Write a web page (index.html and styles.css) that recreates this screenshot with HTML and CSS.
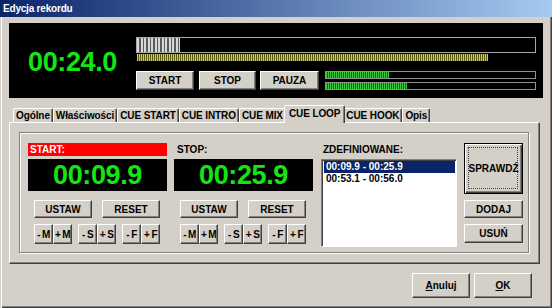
FILE: index.html
```html
<!DOCTYPE html>
<html lang="pl">
<head>
    <meta charset="UTF-8">
    <title>Edycja rekordu</title>
    <link rel="stylesheet" href="styles.css">
</head>
<body>
    <div class="window">
        <div class="titlebar">Edycja rekordu</div>

        <div class="client">
            <div class="player">
                <div class="player-time">00:24.0</div>
                <div class="player-controls">
                    <div class="progress"><div class="progress-fill" style="width: 43px"></div></div>
                    <div class="wave"></div>
                    <div class="player-row">
                        <button class="btn btn-start">START</button>
                        <button class="btn btn-stop">STOP</button>
                        <button class="btn btn-pause">PAUZA</button>
                        <div class="meters">
                            <div class="meter"><div class="meter-fill" style="width: 63px"></div></div>
                            <div class="meter"><div class="meter-fill" style="width: 81px"></div></div>
                        </div>
                    </div>
                </div>
            </div>

            <div class="tabs">
                <div class="tab">Ogólne</div>
                <div class="tab">Właściwości</div>
                <div class="tab">CUE START</div>
                <div class="tab">CUE INTRO</div>
                <div class="tab">CUE MIX</div>
                <div class="tab active">CUE LOOP</div>
                <div class="tab">CUE HOOK</div>
                <div class="tab">Opis</div>
            </div>

            <div class="tab-panel">
                <div class="group">
                    <div class="timer">
                        <div class="timer-label red">START:</div>
                        <div class="timer-display">00:09.9</div>
                        <div class="timer-actions">
                            <button class="btn btn-wide">USTAW</button>
                            <button class="btn btn-wide">RESET</button>
                        </div>
                        <div class="timer-steps">
                            <div class="step-pair"><button class="btn btn-step">- M</button><button class="btn btn-step">+ M</button></div>
                            <div class="step-pair"><button class="btn btn-step">- S</button><button class="btn btn-step">+ S</button></div>
                            <div class="step-pair"><button class="btn btn-step">- F</button><button class="btn btn-step">+ F</button></div>
                        </div>
                    </div>

                    <div class="timer">
                        <div class="timer-label">STOP:</div>
                        <div class="timer-display">00:25.9</div>
                        <div class="timer-actions">
                            <button class="btn btn-wide">USTAW</button>
                            <button class="btn btn-wide">RESET</button>
                        </div>
                        <div class="timer-steps">
                            <div class="step-pair"><button class="btn btn-step">- M</button><button class="btn btn-step">+ M</button></div>
                            <div class="step-pair"><button class="btn btn-step">- S</button><button class="btn btn-step">+ S</button></div>
                            <div class="step-pair"><button class="btn btn-step">- F</button><button class="btn btn-step">+ F</button></div>
                        </div>
                    </div>

                    <div class="loops">
                        <div class="timer-label">ZDEFINIOWANE:</div>
                        <div class="listbox">
                            <div class="list-item selected">00:09.9 - 00:25.9</div>
                            <div class="list-item">00:53.1 - 00:56.0</div>
                        </div>
                    </div>

                    <div class="side-buttons">
                        <button class="btn btn-check">SPRAWDŹ</button>
                        <button class="btn btn-add">DODAJ</button>
                        <button class="btn btn-remove">USUŃ</button>
                    </div>
                </div>
            </div>

            <div class="dialog-buttons">
                <button class="btn btn-dialog"><u>A</u>nuluj</button>
                <button class="btn btn-dialog"><u>O</u>K</button>
            </div>
        </div>
    </div>
</body>
</html>
```

FILE: styles.css
```css
* {
    box-sizing: border-box;
}

body {
    margin: 0;
    background-color: #d4d0c8;
    font-family: "Liberation Sans", Arial, sans-serif;
    font-size: 10px;
    font-weight: bold;
    color: #000;
}

.window {
    width: 552px;
    height: 308px;
    background-color: #d4d0c8;
    box-shadow: inset 1px 0 0 #d4d0c8, inset 2px 0 0 #fff, inset -1px -1px 0 #404040, inset -2px -2px 0 #808080;
}

.titlebar {
    height: 17px;
    line-height: 17px;
    padding-left: 3px;
    color: #fff;
    font-size: 10px;
    letter-spacing: -0.2px;
    background: linear-gradient(to right, #0a246a, #a6caf0);
}

.client {
    padding: 6px 9px 0 9px;
}

/* top player */
.player {
    display: flex;
    width: 534px;
    height: 75px;
    background-color: #000;
}

.player-time {
    width: 127px;
    padding-top: 4px;
    display: flex;
    align-items: center;
    justify-content: center;
    color: #14e614;
    font-size: 27px;
    letter-spacing: -0.4px;
}

.player-controls {
    padding-top: 14px;
}

.progress {
    width: 400px;
    height: 16px;
    border: 1px solid #a8a8a8;
    background-color: #000;
}

.progress-fill {
    height: 100%;
    background: repeating-linear-gradient(to right, #d8d8d8 0, #d8d8d8 2px, #5a5a5a 2px, #5a5a5a 3.5px);
}

.wave {
    width: 351px;
    height: 7px;
    margin: 1px 0 0 1px;
    background: repeating-linear-gradient(to right, #d2d23c 0, #d2d23c 1px, #5a5a10 1px, #5a5a10 2px);
}

.player-row {
    display: flex;
    margin-top: 10px;
    height: 19px;
}

.btn {
    font-family: "Liberation Sans", Arial, sans-serif;
    font-size: 10px;
    font-weight: bold;
    color: #000;
    background-color: #d4d0c8;
    border: 1px solid;
    border-color: #fff #404040 #404040 #fff;
    box-shadow: inset -1px -1px 0 #808080;
    padding: 0;
    cursor: pointer;
}

.btn-start {
    width: 58px;
}

.btn-stop {
    width: 57px;
    margin-left: 5px;
}

.btn-pause {
    width: 59px;
    margin-left: 4px;
}

.meters {
    display: flex;
    flex-direction: column;
    gap: 3px;
    margin-left: 6px;
}

.meter {
    width: 211px;
    height: 8px;
    border: 1px solid #909090;
    background-color: #000;
}

.meter-fill {
    height: 100%;
    background: repeating-linear-gradient(to right, #3ec83e 0, #3ec83e 1px, #0c6a0c 1px, #0c6a0c 2px);
}

/* tabs */
.tabs {
    display: flex;
    align-items: flex-end;
    height: 17px;
    margin-top: 7px;
    padding-left: 4px;
}

.tab {
    height: 14px;
    line-height: 13px;
    padding: 0 2px;
    letter-spacing: -0.1px;
    border-top: 1px solid #fff;
    border-left: 1px solid #fff;
    border-right: 1px solid #404040;
    box-shadow: inset -1px 0 0 #808080;
    border-radius: 2px 2px 0 0;
}

.tab.active {
    position: relative;
    z-index: 1;
    height: 18px;
    line-height: 15px;
    margin: 0 -2px -1px -2px;
    padding: 0 4px;
    background-color: #d4d0c8;
}

.tab-panel {
    width: 531px;
    height: 142px;
    padding: 10px 10px 11px 10px;
    border: 1px solid;
    border-color: #fff #404040 #404040 #fff;
    box-shadow: inset -1px -1px 0 #808080;
}

.group {
    display: flex;
    height: 121px;
    margin: -1px 0 0 -1px;
    padding: 10px 0 0 8px;
    border: 1px solid #808080;
    box-shadow: 1px 1px 0 #fff, inset 1px 1px 0 #fff;
}

/* timers */
.timer {
    width: 139px;
    margin-right: 7px;
}

.timer-label {
    height: 13px;
    line-height: 14px;
    padding-left: 3px;
}

.timer-label.red {
    background-color: #ff0000;
    color: #fff;
    padding-left: 2px;
}

.timer-display {
    height: 32px;
    margin-top: 3px;
    background-color: #000;
    color: #14e614;
    font-size: 27px;
    letter-spacing: -0.4px;
    display: flex;
    align-items: center;
    justify-content: center;
}

.timer-actions {
    display: flex;
    justify-content: space-between;
    margin-top: 9px;
    padding: 0 7px 0 6px;
}

.btn-wide {
    width: 58px;
    height: 18px;
}

.timer-steps {
    display: flex;
    justify-content: space-between;
    margin-top: 6px;
    padding: 0 7px 0 6px;
}

.step-pair {
    display: flex;
}

.btn-step {
    width: 19px;
    height: 20px;
    font-size: 10px;
    letter-spacing: -0.6px;
    white-space: nowrap;
}

/* loop list */
.loops {
    width: 136px;
    margin-left: 1px;
    margin-right: 7px;
}

.loops .timer-label {
    padding-left: 2px;
}

.listbox {
    height: 88px;
    margin-top: 3px;
    padding: 1px 1px;
    background-color: #fff;
    border: 1px solid;
    border-color: #808080 #fff #fff #808080;
    box-shadow: inset 1px 1px 0 #404040;
}

.list-item {
    height: 12px;
    line-height: 12px;
    padding-left: 2px;
    margin-left: 1px;
}

.list-item.selected {
    background-color: #0a246a;
    color: #fff;
}

.side-buttons {
    display: flex;
    flex-direction: column;
    width: 59px;
}

.btn-check {
    position: relative;
    height: 51px;
    border: 1px solid #000;
    box-shadow: inset 1px 1px 0 #fff, inset -1px -1px 0 #404040, inset -2px -2px 0 #808080;
}

.btn-check::after {
    content: "";
    position: absolute;
    top: 3px;
    left: 3px;
    right: 4px;
    bottom: 4px;
    border: 1px dotted #404040;
}

.btn-add {
    height: 18px;
    margin-top: 6px;
}

.btn-remove {
    height: 19px;
    margin-top: 6px;
}

/* dialog buttons */
.dialog-buttons {
    display: flex;
    justify-content: flex-end;
    gap: 4px;
    margin-top: 9px;
    padding-right: 11px;
}

.btn-dialog {
    width: 58px;
    height: 25px;
}
```
